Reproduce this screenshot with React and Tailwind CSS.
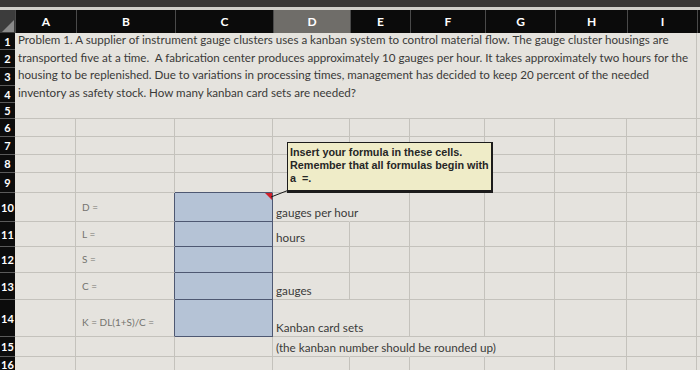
import React from 'react';

const COLS = ['A', 'B', 'C', 'D', 'E', 'F', 'G', 'H', 'I'];
const WIDTHS = ['w-[61px]', 'w-[99px]', 'w-[98px]', 'w-[77px]', 'w-[60px]', 'w-[75px]', 'w-[70px]', 'w-[72px]', 'w-[70px]'];

const problem = [
  'Problem 1. A supplier of instrument gauge clusters uses a kanban system to control material flow. The gauge cluster housings are',
  'transported five at a time.  A fabrication center produces approximately 10 gauges per hour. It takes approximately two hours for the',
  'housing to be replenished. Due to variations in processing times, management has decided to keep 20 percent of the needed',
  'inventory as safety stock. How many kanban card sets are needed?',
];

// rows 6..16
const rows = [
  { n: 6, h: 'h-[18px]' },
  { n: 7, h: 'h-[18px]' },
  { n: 8, h: 'h-[18px]' },
  { n: 9, h: 'h-[20px]', blueBelow: true },
  { n: 10, h: 'h-[29px]', label: 'D =', blue: true, note: 'gauges per hour', spill: 1, flag: true },
  { n: 11, h: 'h-[25px]', label: 'L =', blue: true, note: 'hours' },
  { n: 12, h: 'h-[26px]', label: 'S =', blue: true },
  { n: 13, h: 'h-[27px]', label: 'C =', blue: true, note: 'gauges' },
  { n: 14, h: 'h-[37px]', label: 'K = DL(1+S)/C =', blue: true, note: 'Kanban card sets', spill: 1, low: true },
  { n: 15, h: 'h-[20px]', note: '(the kanban number should be rounded up)', spill: 3 },
  { n: 16, h: 'h-[16px]' },
];

const grid = 'border-[#c4c2bc]';

function RowHead({ n, h }) {
  return (
    <div className={`${h} w-[15px] shrink-0 bg-[#0c0c0c] border-b border-[#5a5a5a] flex items-center justify-center text-[11px] font-bold text-white leading-none`}>
      {n}
    </div>
  );
}

function Row({ r }) {
  return (
    <div className="flex">
      <RowHead n={r.n} h={r.h} />
      {COLS.map((c, i) => {
        let cls = `${r.h} ${WIDTHS[i]} shrink-0 relative border-r border-b ${grid}`;
        let content = null;
        if (c === 'B' && r.label) {
          cls += r.blue ? ' border-r-[#4e5872]' : '';
          content = (
            <div className={`absolute left-[6px] ${r.low ? 'bottom-[6px]' : 'top-0 bottom-0 flex items-center'} text-[10px] text-[#74736e] whitespace-nowrap`}>
              {r.label}
            </div>
          );
        }
        if (c === 'C' && r.blue) {
          cls += ' bg-[#b5c3d6] border-r-[#4e5872] border-b-[#4e5872]';
          if (r.flag) {
            content = (
              <div className="absolute right-0 top-0 w-0 h-0 border-t-[7px] border-l-[7px] border-t-[#d0202a] border-l-transparent" />
            );
          }
        }
        if (c === 'C' && r.blueBelow) cls += ' border-b-[#4e5872]';
        if (c === 'D' && r.note) {
          content = (
            <div className="absolute left-[3px] bottom-[1px] text-[11.7px] leading-[15px] text-[#3b3b3a] whitespace-nowrap z-10">
              {r.note}
            </div>
          );
        }
        if (r.spill && i >= 3 && i < 3 + r.spill) cls += ' border-r-transparent';
        return (
          <div key={c} className={cls}>
            {content}
          </div>
        );
      })}
      <div className={`${r.h} flex-1 border-b ${grid}`} />
    </div>
  );
}

export default function App() {
  return (
    <div className="relative w-[700px] h-[370px] overflow-hidden bg-[#e5e3de] font-['Lato','Liberation_Sans',sans-serif]">
      <div className="h-[7px] bg-[#3a3836]" />
      <div className="h-[3px] bg-[#d2d0ca]" />
      {/* column headers */}
      <div className="flex h-[23px] bg-[#0b0b0b]">
        <div className="relative w-[15px] shrink-0 bg-[#3c3c3c] overflow-hidden">
          <div className="absolute right-[1px] bottom-[1px] w-0 h-0 border-b-[12px] border-l-[12px] border-b-[#8a8a8a] border-l-transparent" />
        </div>
        {COLS.map((c, i) => (
          <div
            key={c}
            className={`${WIDTHS[i]} shrink-0 flex items-center justify-center text-[12px] font-bold text-white border-l border-[#4a4a4a] ${c === 'D' ? 'bg-[#6f6d69]' : ''}`}
          >
            {c}
          </div>
        ))}
        <div className="flex-1 border-l border-[#4a4a4a]" />
      </div>
      {/* rows 1-5 : merged problem text */}
      <div className="flex">
        <div className="flex flex-col">
          {[1, 2, 3, 4, 5].map((n, i) => (
            <RowHead key={n} n={n} h={['h-[17px]', 'h-[18px]', 'h-[18px]', 'h-[17px]', 'h-[16px]'][i]} />
          ))}
        </div>
        <div className={`w-[682px] shrink-0 border-r border-b ${grid} pl-[3px] text-[11.6px] leading-[17.5px] text-[#3a3a38]`}>
          <div className="-mt-[2px]">
            {problem.map((l) => (
              <div key={l} className="whitespace-pre">{l}</div>
            ))}
          </div>
        </div>
        <div className={`flex-1 border-b ${grid}`} />
      </div>
      {rows.map((r) => (
        <Row key={r.n} r={r} />
      ))}

      {/* comment box */}
      <svg className="absolute left-0 top-0" width="700" height="370">
        <line x1="289" y1="190" x2="271" y2="197" stroke="#1a1a1a" strokeWidth="1" />
      </svg>
      <div className="absolute left-[287px] top-[142px] w-[206px] h-[51px] bg-[#efecc8] border border-[#1c1c1c] border-r-[2px] border-b-[3px] pl-[2px] pt-[3px] font-['Liberation_Sans',sans-serif] text-[10.8px] font-bold leading-[13px] text-[#262626]">
        <div>Insert your formula in these cells.</div>
        <div>Remember that all formulas begin with</div>
        <div>a&nbsp; =.</div>
      </div>
    </div>
  );
}
